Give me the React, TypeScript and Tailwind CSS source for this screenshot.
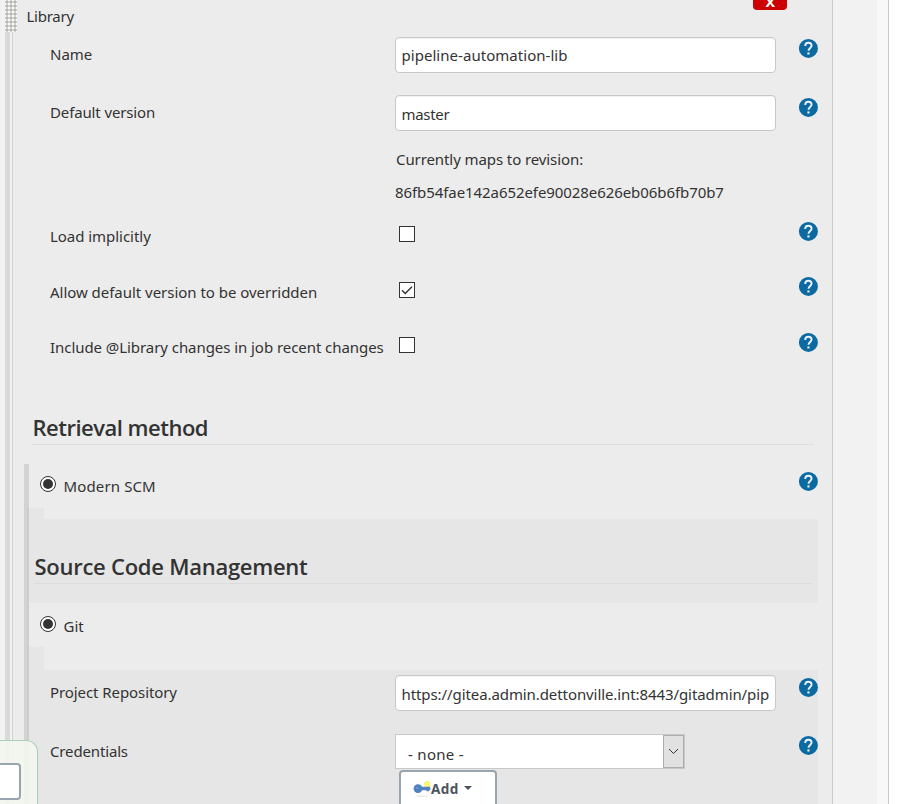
import React from "react";

function Help({ className }: { className: string }) {
  return (
    <svg viewBox="0 0 20 20" className={"ml-auto h-5 w-5 shrink-0 " + className}>
      <circle cx="10.4" cy="10.4" r="9.5" fill="#0b6aa2" />
      <path d="M7.2 8C7.2 5.7 8.5 4.7 10.4 4.7s3.2 1.1 3.2 2.9c0 2.2-3.1 2.6-3.1 5.2" fill="none" stroke="#eef3f6" strokeWidth="1.9" />
      <rect x="9.4" y="14.4" width="2.1" height="2.1" fill="#eef3f6" />
    </svg>
  );
}

function Row({ label, height, labelTop, helpTop, labelClass = "", children }: {
  label: string;
  height: string;
  labelTop: string;
  helpTop: string;
  labelClass?: string;
  children: React.ReactNode;
}) {
  return (
    <div className={"flex items-start pl-[37px] pr-[14px] " + height}>
      <div className={"w-[345px] shrink-0 whitespace-nowrap " + labelTop}>
        <span className={labelClass}>{label}</span>
      </div>
      {children}
      <Help className={helpTop} />
    </div>
  );
}

function Input({ value, className }: { value: string; className: string }) {
  return (
    <div className={"h-9 w-[381px] shrink-0 whitespace-nowrap rounded border border-[#c8c8c8] bg-white pl-[5.5px] shadow-[inset_0_1px_1px_rgba(0,0,0,0.06)] " + className}>
      {value}
    </div>
  );
}

function Checkbox({ checked, className }: { checked?: boolean; className: string }) {
  return (
    <div className={"ml-1 h-4 w-4 shrink-0 border border-[#333] bg-white " + className}>
      {checked && (
        <svg viewBox="0 0 14 14" className="h-[14px] w-[14px]">
          <path d="M2 7.3L5.2 10.5L12 3.8" fill="none" stroke="#333" strokeWidth="1.4" />
        </svg>
      )}
    </div>
  );
}

function Radio({ label, className, labelClass = "" }: { label: string; className: string; labelClass?: string }) {
  return (
    <div className={"flex items-start " + className}>
      <div className="flex h-4 w-4 items-center justify-center rounded-full border border-[#333] bg-white">
        <div className="h-[10px] w-[10px] rounded-full bg-[#333]" />
      </div>
      <span className={"ml-[7.5px] " + labelClass}>{label}</span>
    </div>
  );
}

export default function App() {
  return (
    <div className="relative flex h-[804px] w-[899px] overflow-hidden bg-white font-['Noto_Sans','Open_Sans',sans-serif] text-[15px] leading-5 text-[#333]">
      <div className="relative w-[13px] shrink-0 bg-[#f2f2f2]">
        <div className="ml-[5px] flex h-full w-2 justify-between border-r border-[#d0d0d0]">
          <div className="w-[5px] bg-[#d9d9d9]" />
        </div>
      </div>

      <main className="flex h-full w-[820px] shrink-0 flex-col border-r border-[#ccc] bg-[#ececec]">
        <div className="flex h-[33px] shrink-0 items-start pl-[13.5px] pr-[45px]">
          <span className="mt-[6px] tracking-[-0.25px]">Library</span>
          <div className="ml-auto flex h-[10px] w-[34px] items-end justify-center rounded-b bg-[#c00] text-[13px] font-bold leading-[13px] text-white">
            <span className="mb-px scale-x-110">X</span>
          </div>
        </div>

        <Row label="Name" height="h-[58px]" labelTop="mt-[11px]" helpTop="mt-[5px]">
          <Input value="pipeline-automation-lib" className="mt-1 pt-[7px] tracking-[0.04px]" />
        </Row>
        <Row label="Default version" height="h-[58px]" labelTop="mt-[11px]" helpTop="mt-[6px]" labelClass="tracking-[-0.13px]">
          <Input value="master" className="mt-1 pt-2 tracking-[-0.3px]" />
        </Row>
        <div className="h-[69px] shrink-0 pl-[382px]">
          <div className="ml-px tracking-[-0.09px]">Currently maps to revision:</div>
          <div className="mt-[13px] tracking-[-0.075px]">86fb54fae142a652efe90028e626eb06b6fb70b7</div>
        </div>
        <Row label="Load implicitly" height="h-[56px]" labelTop="mt-2" helpTop="mt-[3px]" labelClass="tracking-[-0.04px]">
          <Checkbox className="mt-2" />
        </Row>
        <Row label="Allow default version to be overridden" height="h-[55px]" labelTop="mt-2" helpTop="mt-[2px]" labelClass="tracking-[-0.03px]">
          <Checkbox checked className="mt-2" />
        </Row>
        <Row label="Include @Library changes in job recent changes" height="h-[57px]" labelTop="mt-2" helpTop="mt-[3px]" labelClass="tracking-[-0.06px]">
          <Checkbox className="mt-2" />
        </Row>

        <h2 className="ml-[19px] mr-[18px] mt-[26px] h-[33px] shrink-0 border-b border-[#dedede] pl-[0.5px] font-['Open_Sans','Noto_Sans',sans-serif] text-[22px] font-semibold leading-[30px] tracking-[-0.5px]">
          Retrieval method
        </h2>

        <div className="ml-[11px] mr-[14px] mt-[19px] flex h-[340px] shrink-0">
          <div className="flex w-[5px] shrink-0 justify-end bg-[#d3d3d3]">
            <div className="mt-11 w-[2px] bg-[#cdcdcd]" />
          </div>
          <div className="min-w-0 flex-1">
            <div className="flex h-11">
              <Radio label="Modern SCM" className="ml-[11px] mt-3" labelClass="tracking-[0.13px]" />
              <Help className="mt-[7px]" />
            </div>
            <div className="h-[11px] w-[15px] bg-[#e6e6e6]" />
            <div className="h-[84px] bg-[#e6e6e6] pl-[5px] pr-[5px] pt-[32px]">
              <h2 className="h-[33px] border-b border-[#dcdcdc] pl-[0.5px] font-['Open_Sans','Noto_Sans',sans-serif] text-[22px] font-semibold leading-[30px] tracking-[-0.26px]">
                Source Code Management
              </h2>
            </div>
            <div className="h-11 pt-[13px]">
              <Radio label="Git" className="ml-[11px]" />
            </div>
            <div className="h-[23px] w-[15px] bg-[#e6e6e6]" />
            <div className="h-[134px] bg-[#e6e6e6] pl-[21px]">
              <div className="flex h-[59px] items-start">
                <span className="mt-3 w-[345px] shrink-0 tracking-[-0.08px]">Project Repository</span>
                <Input value="https://gitea.admin.dettonville.int:8443/gitadmin/pip" className="mt-[5px] pt-2 tracking-[-0.085px]" />
                <Help className="mt-[7px]" />
              </div>
              <div className="flex items-start">
                <span className="mt-3 w-[345px] shrink-0 tracking-[-0.15px]">Credentials</span>
                <div className="mt-[5px]">
                  <div className="flex h-[35px] w-[290px] border border-[#c8c8c8] bg-white">
                    <span className="ml-3 mt-[9px] flex-1 tracking-[0.3px]">- none -</span>
                    <div className="flex w-[21px] items-center justify-center border border-[#adadad] bg-[#e1e1e1]">
                      <svg viewBox="0 0 11 7" className="h-[7px] w-[11px]">
                        <path d="M1 1l4.5 4.5L10 1" fill="none" stroke="#333" />
                      </svg>
                    </div>
                  </div>
                  <div className="ml-1 mt-px flex h-[40px] w-[98px] items-start rounded border-2 border-[#98a5b0] bg-white pl-3 pt-[7px] text-[13.5px] font-bold text-[#4d545d]">
                    <svg viewBox="0 0 18 18" className="mt-px h-[18px] w-[18px] shrink-0">
                      <circle cx="14.2" cy="4.3" r="3.2" fill="#faf573" />
                      <path d="M6 6.8h11.3v3.4H16v1h-2.5v-1H6z" fill="#5183c2" />
                      <circle cx="5" cy="8.6" r="4.4" fill="#4f80bf" />
                      <circle cx="4.2" cy="8" r="1.2" fill="#6b97cd" />
                      <ellipse cx="9" cy="16" rx="6" ry="1" fill="#eee" />
                    </svg>
                    <span className="tracking-[0.4px]">Add</span>
                    <div className="ml-[5px] mt-[7px] border-x-4 border-t-4 border-x-transparent border-t-[#4d545d]" />
                  </div>
                </div>
                <Help className="mt-[6px]" />
              </div>
            </div>
          </div>
        </div>
      </main>

      <div className="w-11 shrink-0 bg-[#f2f2f2]" />
      <div className="w-3 shrink-0 border-r border-[#c8c8c8] bg-[#f8f8f8]" />

      <div className="absolute left-[5px] top-0 h-8 w-3 bg-[#fafaf8] bg-[radial-gradient(circle_at_2px_2px,#b8b8b2_1.3px,transparent_2.1px)] bg-[length:4px_4px]" />
      <div className="absolute bottom-0 left-0 h-16 w-[38px] rounded-tr-xl border-r border-t border-[#a9cfbb] bg-[#f4f8ee]/85 pt-[22px]">
        <div className="h-[37px] w-[21px] rounded-r border-2 border-l-0 border-[#98a5b0] bg-white" />
      </div>
    </div>
  );
}
